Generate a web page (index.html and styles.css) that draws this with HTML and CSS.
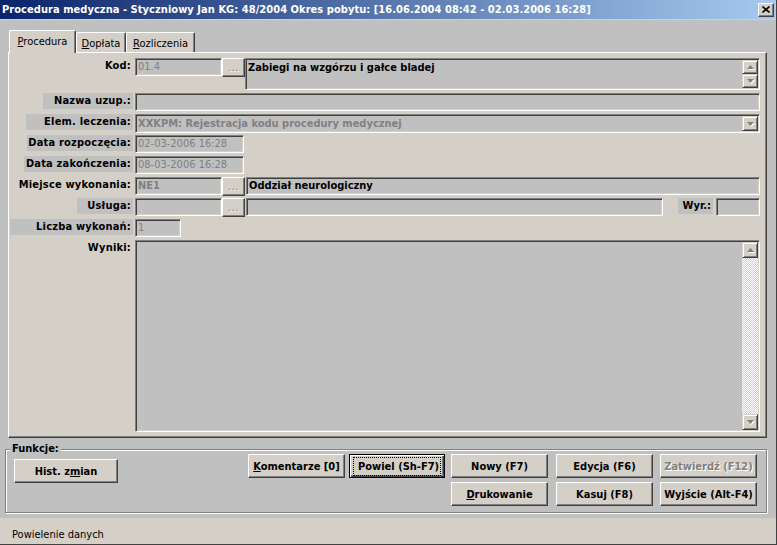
FILE: index.html
```html
<!DOCTYPE html>
<html lang="pl">
<head>
<meta charset="utf-8">
<title>Procedura medyczna</title>
<link rel="stylesheet" href="styles.css">
</head>
<body>
<div class="window">
  <div class="titlebar">
    <span class="title">Procedura medyczna - Styczniowy Jan KG: 48/2004 Okres pobytu: [16.06.2004 08:42 - 02.03.2006 16:28]</span>
    <span class="close"><svg width="8" height="7" viewBox="0 0 8 7"><path d="M0.5 0.5 L7.5 6.5 M7.5 0.5 L0.5 6.5" stroke="#000" stroke-width="1.6"/></svg></span>
  </div>
  <div class="client">
    <div class="tabs">
      <div class="tab active t-proc"><span><u>P</u>rocedura</span></div>
      <div class="tab t-dop"><span><u>D</u>opłata</span></div>
      <div class="tab t-roz"><span><u>R</u>ozliczenia</span></div>
    </div>
    <div class="panel">
      <div class="row r-kod">
        <div class="lbl"><span>Kod:</span></div>
        <div class="field f-code dis">01.4</div>
        <div class="dots">...</div>
        <div class="field memo">
          <span class="memo-text strong">Zabiegi na wzgórzu i gałce bladej</span>
          <div class="vscroll">
            <div class="sbtn"><svg width="7" height="4" viewBox="0 0 7 4"><path d="M3.5 0 L7 4 L0 4 Z" fill="#808080"/></svg></div>
            <div class="sbtn"><svg width="7" height="4" viewBox="0 0 7 4"><path d="M0 0 L7 0 L3.5 4 Z" fill="#808080"/></svg></div>
          </div>
        </div>
      </div>
      <div class="row">
        <div class="lbl"><span class="bg w-nazwa">Nazwa uzup.:</span></div>
        <div class="field grow"></div>
      </div>
      <div class="row r-elem">
        <div class="lbl"><span class="bg w-elem">Elem. leczenia:</span></div>
        <div class="field combo grow">
          <span class="dis strong">XXKPM: Rejestracja kodu procedury medycznej</span>
          <div class="sbtn drop"><svg width="7" height="4" viewBox="0 0 7 4"><path d="M0 0 L7 0 L3.5 4 Z" fill="#808080"/></svg></div>
        </div>
      </div>
      <div class="row">
        <div class="lbl"><span class="bg w-drozp">Data rozpoczęcia:</span></div>
        <div class="field f-date dis">02-03-2006 16:28</div>
      </div>
      <div class="row">
        <div class="lbl"><span class="bg w-dzak">Data zakończenia:</span></div>
        <div class="field f-date dis">08-03-2006 16:28</div>
      </div>
      <div class="row">
        <div class="lbl"><span>Miejsce wykonania:</span></div>
        <div class="field f-code dis strong">NE1</div>
        <div class="dots">...</div>
        <div class="field grow f-after strong">Oddział neurologiczny</div>
      </div>
      <div class="row">
        <div class="lbl"><span class="bg w-usl">Usługa:</span></div>
        <div class="field f-code"></div>
        <div class="dots">...</div>
        <div class="field f-after f-usl"></div>
        <span class="lbl-wyr">Wyr.:</span>
        <div class="field grow"></div>
      </div>
      <div class="row">
        <div class="lbl"><span class="bg w-licz">Liczba wykonań:</span></div>
        <div class="field f-num dis">1</div>
      </div>
      <div class="row r-wyn">
        <div class="lbl"><span>Wyniki:</span></div>
        <div class="field memo big">
          <span class="memo-text"></span>
          <div class="vscroll">
            <div class="sbtn"><svg width="7" height="4" viewBox="0 0 7 4"><path d="M3.5 0 L7 4 L0 4 Z" fill="#808080"/></svg></div>
            <div class="track"></div>
            <div class="sbtn"><svg width="7" height="4" viewBox="0 0 7 4"><path d="M0 0 L7 0 L3.5 4 Z" fill="#808080"/></svg></div>
          </div>
        </div>
      </div>
    </div>
    <fieldset class="funcs">
      <legend>Funkcje:</legend>
      <div class="funcs-body">
        <div class="btn hist">Hist. z<u>m</u>ian</div>
        <div class="btn-grid">
          <div class="btn"><span><u>K</u>omentarze [0]</span></div>
          <div class="btn default"><span class="focus">Powiel (Sh-F7)</span></div>
          <div class="btn">Nowy (F7)</div>
          <div class="btn">Edycja (F6)</div>
          <div class="btn disabled">Zatwierdź (F12)</div>
          <div class="btn c3"><span><u>D</u>rukowanie</span></div>
          <div class="btn">Kasuj (F8)</div>
          <div class="btn">Wyjście (Alt-F4)</div>
        </div>
      </div>
    </fieldset>
  </div>
  <div class="status">Powielenie danych</div>
</div>
</body>
</html>
```

FILE: styles.css
```css
* { box-sizing: border-box; }
html, body { margin: 0; padding: 0; }
body {
  width: 777px;
  height: 545px;
  overflow: hidden;
  background: #c0c0c0;
  font-family: "DejaVu Sans Condensed", "DejaVu Sans", sans-serif;
  font-size: 11px;
  color: #000;
}
.window {
  width: 777px;
  height: 545px;
  display: flex;
  flex-direction: column;
  background: #c0c0c0;
  border-right: 1px solid #404040;
  border-bottom: 1px solid #404040;
}
.titlebar {
  flex: none;
  height: 19px;
  display: flex;
  align-items: center;
  justify-content: space-between;
  padding: 0 2px 0 2px;
  background: linear-gradient(90deg, #0a246a 0%, #a6caf0 100%);
  color: #fff;
  font-weight: bold;
  white-space: nowrap;
}
.title { letter-spacing: 0.05px; }
.close {
  width: 16px;
  height: 14px;
  background: #d4d0c8;
  border: 1px solid;
  border-color: #fff #404040 #404040 #fff;
  box-shadow: inset -1px -1px #808080;
  display: flex;
  align-items: center;
  justify-content: center;
}
.close svg { display: block; }
.client {
  flex: 1;
  display: flex;
  flex-direction: column;
  border-top: 1px solid #d4d0c8;
  padding-top: 10px;
}
.tabs {
  display: flex;
  align-items: flex-end;
  height: 22px;
  padding-left: 9px;
  position: relative;
  z-index: 1;
}
.tab {
  height: 20px;
  display: flex;
  align-items: center;
  justify-content: center;
  padding-top: 1px;
  background: #d4d0c8;
  border-top: 1px solid #fff;
  border-left: 1px solid #fff;
  border-right: 1px solid #404040;
  box-shadow: inset -1px 0 #808080;
  border-radius: 2px 2px 0 0;
}
.tab.active {
  height: 23px;
  margin-bottom: -1px;
  padding-top: 0;
  padding-bottom: 2px;
}
.t-proc { width: 67px; }
.t-dop { width: 50px; }
.t-roz { width: 69px; }
.panel {
  margin-left: 8px;
  width: 759px;
  height: 386px;
  background: #d4d0c8;
  border: 1px solid;
  border-color: #fff #404040 #404040 #fff;
  box-shadow: inset -1px -1px #808080;
  padding: 5px 6px 5px 1px;
  display: flex;
  flex-direction: column;
  gap: 3px;
}
.row {
  display: flex;
  align-items: flex-start;
  height: 18px;
  flex: none;
}
.r-kod { height: 32px; }
.r-elem { height: 19px; margin-bottom: -1px; }
.r-wyn { height: 192px; }
.lbl {
  width: 125px;
  flex: none;
  display: flex;
  justify-content: flex-end;
  padding-right: 2px;
  font-weight: bold;
  white-space: nowrap;
  letter-spacing: 0.2px;
}
.lbl span {
  height: 16px;
  line-height: 16px;
  padding-right: 2px;
  text-align: right;
}
.lbl .bg { background: #c0c0c0; }
.w-nazwa { width: 90px; }
.w-elem { width: 107px; }
.w-drozp { width: 106px; }
.w-dzak { width: 109px; }
.w-usl { width: 56px; }
.w-licz { width: 123px; }
.field {
  height: 18px;
  background: #c0c0c0;
  border: 1px solid;
  border-color: #808080 #fff #fff #808080;
  box-shadow: inset 1px 1px #404040, inset -1px -1px #d4d0c8;
  padding: 0 2px 0 2px;
  line-height: 16px;
  white-space: nowrap;
  overflow: hidden;
  flex: none;
}
.grow { flex: 1; }
.dis { color: #808080; }
.strong { font-weight: bold; }
.f-code { width: 87px; }
.f-date { width: 109px; }
.f-num { width: 46px; }
.f-after { margin-left: 1px; }
.f-usl { width: 417px; }
.dots {
  width: 23px;
  height: 19px;
  flex: none;
  display: flex;
  align-items: flex-end;
  justify-content: center;
  padding-bottom: 2px;
  background: #d4d0c8;
  border: 1px solid;
  border-color: #fff #404040 #404040 #fff;
  box-shadow: inset -1px -1px #808080;
  color: #808080;
  text-shadow: 1px 1px #fff;
  line-height: 12px;
  font-size: 11px;
  letter-spacing: 0.5px;
}
.memo {
  flex: 1;
  height: 32px;
  display: flex;
  align-items: stretch;
  padding: 1px 1px 1px 2px;
  line-height: 13px;
}
.memo-text { flex: 1; padding-top: 1px; }
.memo.big { height: 192px; }
.vscroll {
  width: 16px;
  flex: none;
  display: flex;
  flex-direction: column;
}
.sbtn {
  flex: 1;
  display: flex;
  align-items: center;
  justify-content: center;
  background: #d4d0c8;
  border: 1px solid;
  border-color: #d4d0c8 #404040 #404040 #d4d0c8;
  box-shadow: inset 1px 1px #fff, inset -1px -1px #808080;
}
.sbtn svg { display: block; filter: drop-shadow(1px 1px 0 #fff); }
.big .sbtn { flex: none; height: 16px; }
.track {
  flex: 1;
  background-color: #fff;
  background-image: repeating-conic-gradient(#d4d0c8 0 25%, #fff 0 50%);
  background-size: 2px 2px;
}
.combo {
  display: flex;
  align-items: center;
  justify-content: space-between;
  height: 19px;
  padding: 1px 1px 1px 2px;
}
.drop { flex: none; width: 16px; height: 15px; }
.lbl-wyr {
  margin-left: 15px;
  margin-right: 3px;
  width: 35px;
  height: 16px;
  line-height: 16px;
  text-align: right;
  padding-right: 2px;
  background: #c0c0c0;
  font-weight: bold;
  flex: none;
}
.funcs {
  margin: 5px 0 0 5px;
  width: 762px;
  height: 70px;
  padding: 0;
  min-width: 0;
  border: 1px solid #808080;
  box-shadow: inset 1px 1px #fff, 1px 1px #fff;
  background: #c0c0c0;
}
.funcs legend {
  margin-left: 4px;
  padding: 0 2px;
  font-weight: bold;
  line-height: 12px;
  background: #c0c0c0;
}
.funcs-body {
  display: flex;
  align-items: flex-start;
  margin-top: -1px;
}
.btn {
  width: 97px;
  height: 24px;
  display: flex;
  align-items: center;
  justify-content: center;
  background: #d4d0c8;
  border: 1px solid;
  border-color: #fff #404040 #404040 #fff;
  box-shadow: inset -1px -1px #808080;
  font-weight: bold;
  white-space: nowrap;
}
.hist { width: 104px; margin: 5px 0 0 8px; }
.btn-grid {
  margin-left: 130px;
  display: grid;
  grid-template-columns: 101px 102px 105px 104px 97px;
  row-gap: 4px;
}
.btn.c3 { grid-column: 3; }
.btn.default {
  width: 96px;
  border: 1px solid #000;
  box-shadow: inset 1px 1px #fff, inset -1px -1px #404040, inset -2px -2px #808080;
}
.focus {
  outline: 1px dotted #000;
  outline-offset: 0;
  padding: 2px 4px;
  display: block;
  width: 86px;
  text-align: center;
}
.btn.disabled { color: #808080; text-shadow: 1px 1px #fff; }
.status {
  flex: none;
  height: 26px;
  margin-top: 5px;
  background: #d4d0c8;
  padding: 10px 0 0 12px;
  line-height: 14px;
}
```
